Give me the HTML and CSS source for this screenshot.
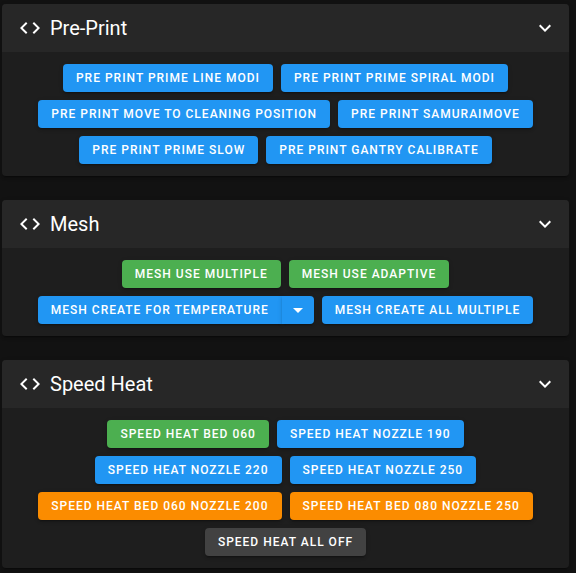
FILE: index.html
```html
<!DOCTYPE html>
<html lang="en">

    <head>
        <meta charset="utf-8">
        <meta name="viewport" content="width=device-width, initial-scale=1">
        <title>Macros</title>
        <link rel="stylesheet" href="styles.css">
    </head>

    <body>
        <!-- Pre-Print macros -->
        <section class="panel">
            <header class="panel-header">
                <svg class="icon" viewBox="0 0 24 24" aria-hidden="true"><path d="M14.6,16.6L19.2,12L14.6,7.4L16,6L22,12L16,18L14.6,16.6M9.4,16.6L4.8,12L9.4,7.4L8,6L2,12L8,18L9.4,16.6Z"/></svg>
                <h2>Pre-Print</h2>
                <button type="button" class="toggle" aria-label="Collapse Pre-Print">
                    <svg class="icon" viewBox="0 0 24 24" aria-hidden="true"><path d="M7.41,8.58L12,13.17L16.59,8.58L18,10L12,16L6,10L7.41,8.58Z"/></svg>
                </button>
            </header>
            <div class="macros">
                <button type="button" class="btn blue">PRE PRINT PRIME LINE MODI</button>
                <button type="button" class="btn blue">PRE PRINT PRIME SPIRAL MODI</button>
                <button type="button" class="btn blue">PRE PRINT MOVE TO CLEANING POSITION</button>
                <button type="button" class="btn blue">PRE PRINT SAMURAIMOVE</button>
                <button type="button" class="btn blue">PRE PRINT PRIME SLOW</button>
                <button type="button" class="btn blue">PRE PRINT GANTRY CALIBRATE</button>
            </div>
        </section>

        <!-- Mesh macros -->
        <section class="panel">
            <header class="panel-header">
                <svg class="icon" viewBox="0 0 24 24" aria-hidden="true"><path d="M14.6,16.6L19.2,12L14.6,7.4L16,6L22,12L16,18L14.6,16.6M9.4,16.6L4.8,12L9.4,7.4L8,6L2,12L8,18L9.4,16.6Z"/></svg>
                <h2>Mesh</h2>
                <button type="button" class="toggle" aria-label="Collapse Mesh">
                    <svg class="icon" viewBox="0 0 24 24" aria-hidden="true"><path d="M7.41,8.58L12,13.17L16.59,8.58L18,10L12,16L6,10L7.41,8.58Z"/></svg>
                </button>
            </header>
            <div class="macros">
                <button type="button" class="btn green">MESH USE MULTIPLE</button>
                <button type="button" class="btn green">MESH USE ADAPTIVE</button>
                <!-- Macro with a parameter menu -->
                <div class="btn-group">
                    <button type="button" class="btn blue">MESH CREATE FOR TEMPERATURE</button>
                    <button type="button" class="btn blue btn-menu" aria-label="Parameters">
                        <svg class="icon" viewBox="0 0 24 24" aria-hidden="true"><path d="M7,10L12,15L17,10H7Z"/></svg>
                    </button>
                </div>
                <button type="button" class="btn blue">MESH CREATE ALL MULTIPLE</button>
            </div>
        </section>

        <!-- Speed Heat macros -->
        <section class="panel">
            <header class="panel-header">
                <svg class="icon" viewBox="0 0 24 24" aria-hidden="true"><path d="M14.6,16.6L19.2,12L14.6,7.4L16,6L22,12L16,18L14.6,16.6M9.4,16.6L4.8,12L9.4,7.4L8,6L2,12L8,18L9.4,16.6Z"/></svg>
                <h2>Speed Heat</h2>
                <button type="button" class="toggle" aria-label="Collapse Speed Heat">
                    <svg class="icon" viewBox="0 0 24 24" aria-hidden="true"><path d="M7.41,8.58L12,13.17L16.59,8.58L18,10L12,16L6,10L7.41,8.58Z"/></svg>
                </button>
            </header>
            <div class="macros">
                <button type="button" class="btn green">SPEED HEAT BED 060</button>
                <button type="button" class="btn blue">SPEED HEAT NOZZLE 190</button>
                <button type="button" class="btn blue">SPEED HEAT NOZZLE 220</button>
                <button type="button" class="btn blue">SPEED HEAT NOZZLE 250</button>
                <button type="button" class="btn orange">SPEED HEAT BED 060 NOZZLE 200</button>
                <button type="button" class="btn orange">SPEED HEAT BED 080 NOZZLE 250</button>
                <button type="button" class="btn grey">SPEED HEAT ALL OFF</button>
            </div>
        </section>
    </body>

</html>
```
FILE: styles.css
```css
* {
    box-sizing: border-box;
}

body {
    margin: 0;
    padding: 4px 7px 5px 2px;
    background-color: #121212;
    color: white;
    font-family: Roboto, sans-serif;
}

.panel {
    margin-bottom: 24px;
    border-radius: 4px;
    background-color: #1e1e1e;
    box-shadow: 0 3px 1px -2px rgba(0, 0, 0, 0.2), 0 2px 2px 0 rgba(0, 0, 0, 0.14), 0 1px 5px 0 rgba(0, 0, 0, 0.12);
}
.panel:last-child {
    margin-bottom: 0;
}

.panel-header {
    display: flex;
    align-items: center;
    height: 48px;
    padding: 0 12px 0 16px;
    border-radius: 4px 4px 0 0;
    background-color: #272727;
}
.panel-header h2 {
    flex: 1;
    margin: 0 0 0 8px;
    font-size: 20px;
    font-weight: 400;
    line-height: 32px;
}

.icon {
    display: block;
    width: 24px;
    height: 24px;
    fill: currentColor;
}

.toggle {
    padding: 0;
    border: none;
    background: none;
    color: inherit;
    cursor: pointer;
}

.macros {
    display: flex;
    flex-wrap: wrap;
    justify-content: center;
    gap: 8px;
    padding: 12px;
}

.btn {
    height: 28px;
    padding: 0 13px;
    border: none;
    border-radius: 4px;
    color: white;
    font-family: inherit;
    font-size: 12px;
    font-weight: 500;
    letter-spacing: 1px;
    white-space: nowrap;
    cursor: pointer;
    box-shadow: 0 3px 1px -2px rgba(0, 0, 0, 0.2), 0 2px 2px 0 rgba(0, 0, 0, 0.14), 0 1px 5px 0 rgba(0, 0, 0, 0.12);
}
.blue {
    background-color: #2196f3;
}
.green {
    background-color: #4caf50;
}
.orange {
    background-color: #fb8c00;
}
.grey {
    background-color: #424242;
}

.btn-group {
    display: flex;
}
.btn-group .btn:first-child {
    border-radius: 4px 0 0 4px;
}
.btn-group .btn-menu {
    padding: 0 4px;
    border-radius: 0 4px 4px 0;
}
```
